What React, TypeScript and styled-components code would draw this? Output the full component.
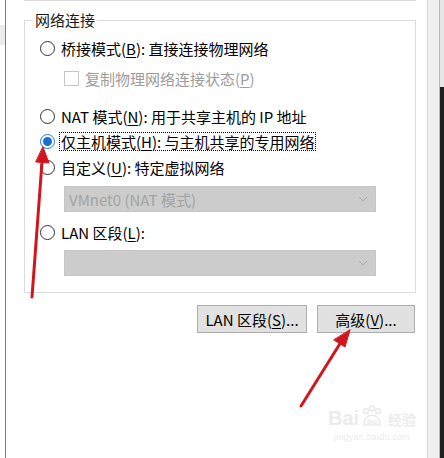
import React from "react";
import styled, { createGlobalStyle, css } from "styled-components";

const Global = createGlobalStyle`
  html, body { margin: 0; padding: 0; background: #ffffff; overflow: hidden; }
  body { font-family: "Noto Sans CJK SC", "Noto Sans", sans-serif; }
  * { box-sizing: border-box; }
`;

const Page = styled.div`
  position: relative;
  width: 444px;
  height: 458px;
  display: flex;
  overflow: hidden;
  background: #ffffff;
`;

const LeftRail = styled.div`
  flex: none;
  width: 6px;
  border-right: 1px solid #7d7d7d;
  background: #ffffff;
  padding-top: 25px;
`;

const RailTab = styled.div`
  width: 5px;
  height: 20px;
  background: #ececec;
`;

const Main = styled.div`
  flex: none;
  width: 421px;
  padding-left: 18px;
  display: flex;
  flex-direction: column;
`;

const TopEdge = styled.div`
  width: 392px;
  height: 1px;
  background: #dadada;
`;

const Group = styled.fieldset`
  margin: 10px 0 0 0;
  padding: 0;
  width: 392px;
  border: 1px solid #dcdcdc;
`;

const Legend = styled.legend`
  margin-left: 8px;
  padding: 0 2px;
  font-size: 15px;
  line-height: 18px;
  color: #1a1a1a;
`;

const Content = styled.div`
  padding: 9px 0 16px 15px;
  display: flex;
  flex-direction: column;
`;

const Row = styled.div<{ $mt?: number; $indent?: number }>`
  display: flex;
  align-items: center;
  height: 20px;
  margin-top: ${(p) => p.$mt ?? 0}px;
  margin-left: ${(p) => p.$indent ?? 0}px;
  gap: 6px;
  font-size: 15px;
  color: #000;
  white-space: nowrap;
`;

const Radio = styled.span<{ $checked?: boolean }>`
  position: relative;
  flex: none;
  width: 15px;
  height: 15px;
  border-radius: 50%;
  border: 1px solid #333333;
  background: #fff;
  ${(p) =>
    p.$checked &&
    css`
      border-color: #2a7ad8;
      &::after {
        content: "";
        position: absolute;
        left: 2px;
        top: 2px;
        width: 9px;
        height: 9px;
        border-radius: 50%;
        background: #1672d6;
      }
    `}
`;

const Check = styled.span`
  flex: none;
  width: 15px;
  height: 15px;
  border: 1px solid #c6c6c6;
  background: #fff;
`;

const Label = styled.span<{ $disabled?: boolean; $focus?: boolean }>`
  color: ${(p) => (p.$disabled ? "#9c9c9c" : "#000")};
  line-height: 17px;
  ${(p) =>
    p.$focus &&
    css`
      outline: 1px dotted #000;
      outline-offset: 0px;
      margin-left: -1px;
      padding-left: 1px;
    `}
`;

const Key = styled.u`
  text-underline-offset: 2px;
`;

const Select = styled.div<{ $mt: number }>`
  margin-top: ${(p) => p.$mt}px;
  margin-left: 24px;
  width: 312px;
  height: 26px;
  background: #cccccc;
  border: 1px solid #c6c6c6;
  display: flex;
  align-items: center;
  justify-content: space-between;
  padding: 0 7px 0 4px;
  font-size: 15px;
  color: #a3a3a3;
`;

const Chevron = styled.svg`
  width: 10px;
  height: 6px;
`;

const Buttons = styled.div`
  width: 392px;
  margin-top: 12px;
  padding-right: 1px;
  display: flex;
  justify-content: flex-end;
  gap: 10px;
`;

const Button = styled.div<{ $w: number }>`
  width: ${(p) => p.$w}px;
  height: 28px;
  background: #e1e1e1;
  border: 1px solid #adadad;
  display: flex;
  align-items: center;
  justify-content: center;
  font-size: 15px;
  color: #000;
  white-space: nowrap;
`;

const RightStrip = styled.div`
  flex: 1;
  align-self: stretch;
  border-left: 1px solid #d6d6d6;
  background: linear-gradient(
    to right,
    #f0f0f0 0,
    #f0f0f0 11px,
    #b9b9b9 11px,
    #b9b9b9 12px,
    transparent 12px
  );
  display: flex;
  justify-content: flex-end;
`;

const EdgeBar = styled.div`
  width: 4px;
  display: flex;
  flex-direction: column;
`;

const EdgeTop = styled.div`
  height: 87px;
  background: #e6e6e6;
`;

const EdgeBottom = styled.div`
  flex: 1;
  background: #1f1f1f;
`;

const Overlay = styled.svg`
  position: absolute;
  left: 0;
  top: 0;
  pointer-events: none;
`;

const Watermark = styled.div`
  position: absolute;
  left: 326px;
  top: 405px;
  width: 92px;
  display: flex;
  flex-direction: column;
  align-items: center;
  color: #ececec;
  font-family: "Liberation Sans", "Noto Sans CJK SC", sans-serif;
`;

const WmTop = styled.div`
  display: flex;
  align-items: flex-end;
  font-size: 20px;
  font-weight: 700;
  line-height: 22px;
  gap: 1px;
`;

const WmCjk = styled.span`
  font-size: 14px;
  line-height: 18px;
  margin-left: 3px;
`;

const WmUrl = styled.div`
  font-size: 9px;
  margin-top: 3px;
  letter-spacing: 0.2px;
`;

const Paw = () => (
  <svg width="24" height="24" viewBox="0 0 24 24">
    <g fill="none" stroke="#eaeaea" strokeWidth="1.5">
      <circle cx="6" cy="6" r="2.5" />
      <circle cx="12" cy="3.5" r="2.5" />
      <circle cx="18" cy="6" r="2.5" />
      <path d="M4 20 Q4 11 12 10 Q20 11 20 20 Z" />
    </g>
    <text x="12" y="19" textAnchor="middle" fontSize="8" fill="#eaeaea" fontFamily="Liberation Sans, sans-serif">du</text>
  </svg>
);

export default function App() {
  return (
    <>
      <Global />
      <Page>
        <LeftRail>
          <RailTab />
        </LeftRail>
        <Main>
          <TopEdge />
          <Group>
            <Legend>网络连接</Legend>
            <Content>
              <Row>
                <Radio />
                <Label>
                  桥接模式(<Key>B</Key>): 直接连接物理网络
                </Label>
              </Row>
              <Row $mt={10} $indent={24}>
                <Check />
                <Label $disabled>
                  复制物理网络连接状态(<Key>P</Key>)
                </Label>
              </Row>
              <Row $mt={18}>
                <Radio />
                <Label>
                  NAT 模式(<Key>N</Key>): 用于共享主机的 IP 地址
                </Label>
              </Row>
              <Row $mt={5}>
                <Radio $checked />
                <Label $focus>
                  仅主机模式(<Key>H</Key>): 与主机共享的专用网络
                </Label>
              </Row>
              <Row $mt={6}>
                <Radio />
                <Label>
                  自定义(<Key>U</Key>): 特定虚拟网络
                </Label>
              </Row>
              <Select $mt={9}>
                <span>VMnet0 (NAT 模式)</span>
                <Chevron viewBox="0 0 10 6">
                  <path d="M1 1 L5 5 L9 1" fill="none" stroke="#aaaaaa" strokeWidth="1" />
                </Chevron>
              </Select>
              <Row $mt={10}>
                <Radio />
                <Label>
                  LAN 区段(<Key>L</Key>):
                </Label>
              </Row>
              <Select $mt={8}>
                <span />
                <Chevron viewBox="0 0 10 6">
                  <path d="M1 1 L5 5 L9 1" fill="none" stroke="#aaaaaa" strokeWidth="1" />
                </Chevron>
              </Select>
            </Content>
          </Group>
          <Buttons>
            <Button $w={110}>
              LAN 区段(<Key>S</Key>)...
            </Button>
            <Button $w={98}>
              高级(<Key>V</Key>)...
            </Button>
          </Buttons>
        </Main>
        <RightStrip>
          <EdgeBar>
            <EdgeTop />
            <EdgeBottom />
          </EdgeBar>
        </RightStrip>
        <Watermark>
          <WmTop>
            <span>Bai</span>
            <Paw />
            <WmCjk>经验</WmCjk>
          </WmTop>
          <WmUrl>jingyan.baidu.com</WmUrl>
        </Watermark>
        <Overlay width="444" height="458" viewBox="0 0 444 458">
          <g stroke="#d4141c" strokeWidth="3" strokeLinecap="round" fill="#d4141c">
            <line x1="32" y1="297" x2="42" y2="162" />
            <path d="M43 147 L49 163 L36 162 Z" strokeWidth="1" strokeLinejoin="round" />
            <line x1="301" y1="406" x2="341" y2="342" />
            <path d="M350 330 L345 347 L334 340 Z" strokeWidth="1" strokeLinejoin="round" />
          </g>
        </Overlay>
      </Page>
    </>
  );
}
